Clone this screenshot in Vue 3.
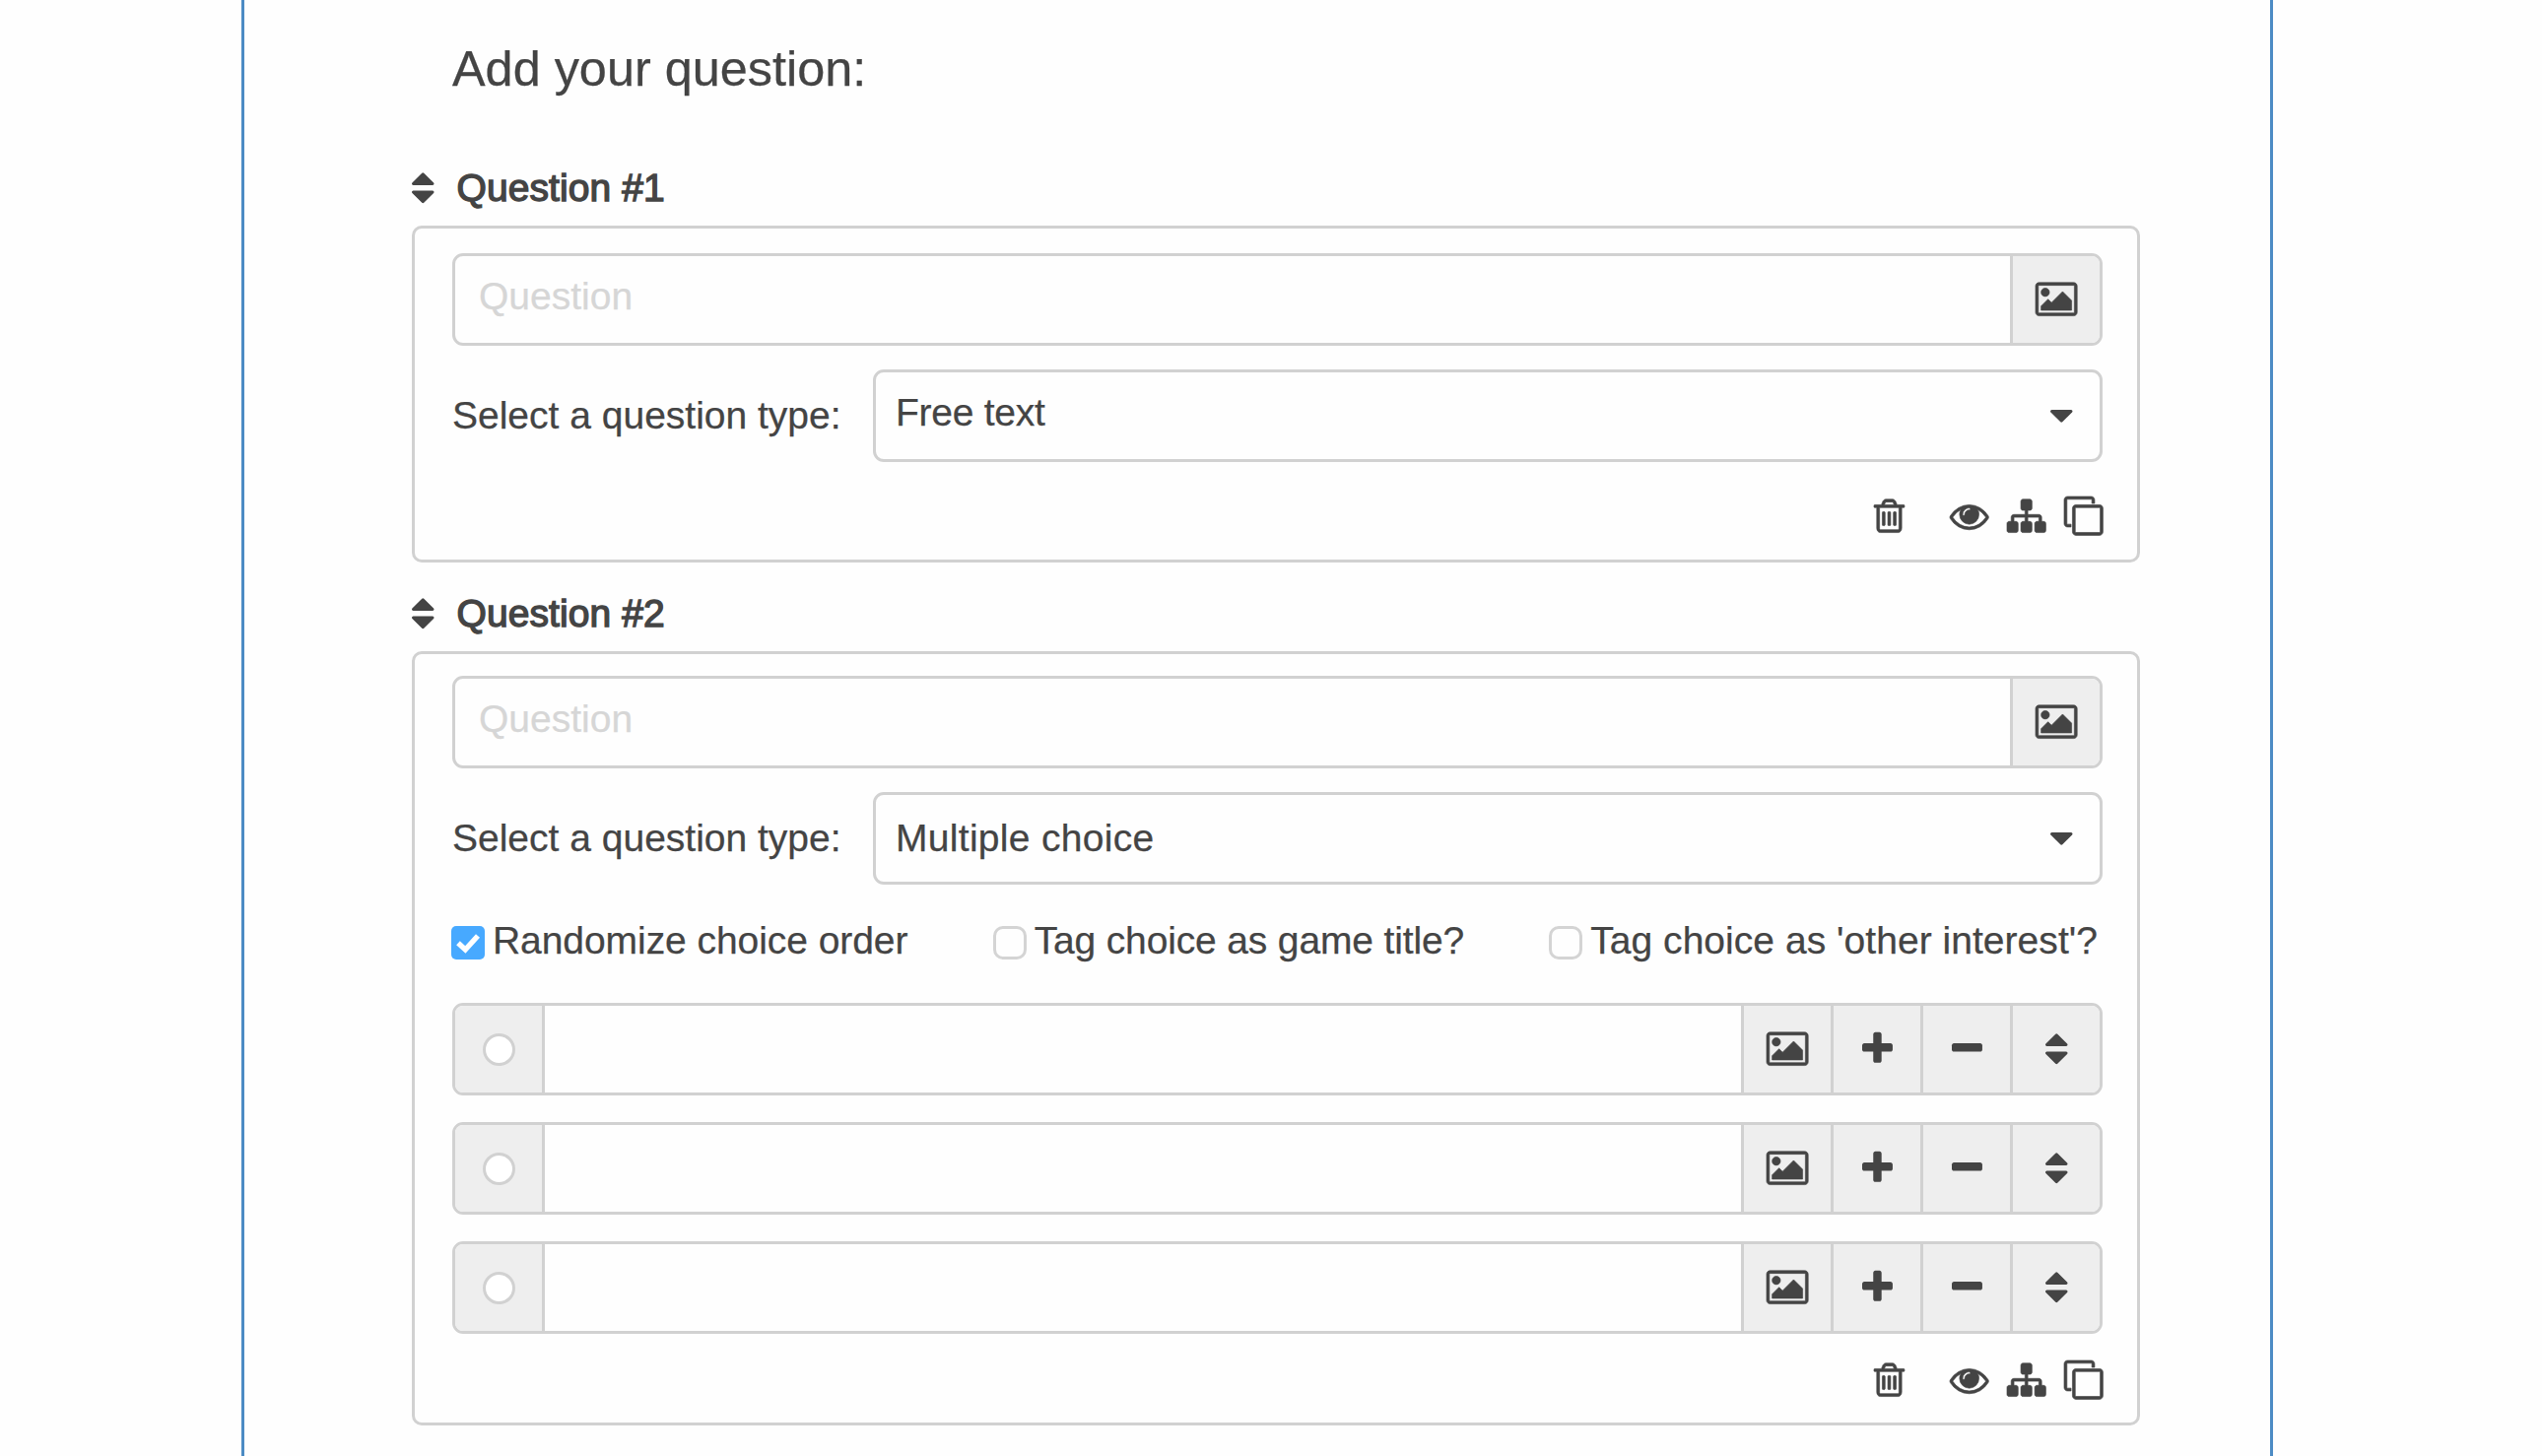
<script setup>
import { reactive } from 'vue'

const icons = {
  sort: {
    box: '384 0 1024 1792',
    d: 'M1408 1088q0 26-19 45l-448 448q-19 19-45 19t-45-19l-448-448q-19-19-19-45t19-45 45-19h896q26 0 45 19t19 45zm0-384q0 26-19 45t-45 19h-896q-26 0-45-19t-19-45 19-45l448-448q19-19 45-19t45 19l448 448q19 19 19 45z',
  },
  caret: {
    box: '384 0 1024 1792',
    d: 'M1408 704q0 26-19 45l-448 448q-19 19-45 19t-45-19l-448-448q-19-19-19-45t19-45 45-19h896q26 0 45 19t19 45z',
  },
  image: {
    box: '-64 0 1920 1792',
    d: 'M576 576q0 80-56 136t-136 56-136-56-56-136 56-136 136-56 136 56 56 136zm1024 384v448h-1408v-192l320-320 160 160 512-512zm96-704h-1600q-13 0-22.5 9.5t-9.5 22.5v1216q0 13 9.5 22.5t22.5 9.5h1600q13 0 22.5-9.5t9.5-22.5v-1216q0-13-9.5-22.5t-22.5-9.5zm160 32v1216q0 66-47 113t-113 47h-1600q-66 0-113-47t-47-113v-1216q0-66 47-113t113-47h1600q66 0 113 47t47 113z',
  },
  plus: {
    box: '192 0 1408 1792',
    d: 'M1600 736v192q0 40-28 68t-68 28h-416v416q0 40-28 68t-68 28h-192q-40 0-68-28t-28-68v-416h-416q-40 0-68-28t-28-68v-192q0-40 28-68t68-28h416v-416q0-40 28-68t68-28h192q40 0 68 28t28 68v416h416q40 0 68 28t28 68z',
  },
  minus: {
    box: '192 0 1408 1792',
    d: 'M1600 736v192q0 40-28 68t-68 28h-1216q-40 0-68-28t-28-68v-192q0-40 28-68t68-28h1216q40 0 68 28t28 68z',
  },
  trash: {
    box: '192 0 1408 1792',
    d: 'M704 736v576q0 14-9 23t-23 9h-64q-14 0-23-9t-9-23v-576q0-14 9-23t23-9h64q14 0 23 9t9 23zm256 0v576q0 14-9 23t-23 9h-64q-14 0-23-9t-9-23v-576q0-14 9-23t23-9h64q14 0 23 9t9 23zm256 0v576q0 14-9 23t-23 9h-64q-14 0-23-9t-9-23v-576q0-14 9-23t23-9h64q14 0 23 9t9 23zm128 724v-948h-896v948q0 22 7 40.5t14.5 27 10.5 8.5h832q3 0 10.5-8.5t14.5-27 7-40.5zm-672-1076h448l-48-117q-7-9-17-11h-317q-10 2-17 11zm928 32v64q0 14-9 23t-23 9h-96v948q0 83-47 143.5t-113 60.5h-832q-66 0-113-58.5t-47-141.5v-952h-96q-14 0-23-9t-9-23v-64q0-14 9-23t23-9h309l70-167q15-37 54-63t79-26h320q40 0 79 26t54 63l70 167h309q14 0 23 9t9 23z',
  },
  eye: {
    box: '0 0 1792 1792',
    d: 'M1664 960q-152-236-381-353 61 104 61 225 0 185-131.5 316.5t-316.5 131.5-316.5-131.5-131.5-316.5q0-121 61-225-229 117-381 353 133 205 333.5 326.5t434.5 121.5 434.5-121.5 333.5-326.5zm-720-384q0-20-14-34t-34-14q-125 0-214.5 89.5t-89.5 214.5q0 20 14 34t34 14 34-14 14-34q0-86 61-147t147-61q20 0 34-14t14-34zm848 384q0 34-20 69-140 230-376.5 368.5t-499.5 138.5-499.5-139-376.5-368q-20-35-20-69t20-69q140-229 376.5-368t499.5-139 499.5 139 376.5 368q20 35 20 69z',
  },
  sitemap: {
    box: '0 0 1792 1792',
    d: 'M1792 1248v320q0 40-28 68t-68 28h-320q-40 0-68-28t-28-68v-320q0-40 28-68t68-28h96v-192h-512v192h96q40 0 68 28t28 68v320q0 40-28 68t-68 28h-320q-40 0-68-28t-28-68v-320q0-40 28-68t68-28h96v-192h-512v192h96q40 0 68 28t28 68v320q0 40-28 68t-68 28h-320q-40 0-68-28t-28-68v-320q0-40 28-68t68-28h96v-192q0-52 38-90t90-38h512v-192h-96q-40 0-68-28t-28-68v-320q0-40 28-68t68-28h320q40 0 68 28t28 68v320q0 40-28 68t-68 28h-96v192h512q52 0 90 38t38 90v192h96q40 0 68 28t28 68z',
  },
  clone: {
    box: '0 0 1792 1792',
    d: 'M1664 1632v-1088q0-13-9.5-22.5t-22.5-9.5h-1088q-13 0-22.5 9.5t-9.5 22.5v1088q0 13 9.5 22.5t22.5 9.5h1088q13 0 22.5-9.5t9.5-22.5zm128-1088v1088q0 66-47 113t-113 47h-1088q-66 0-113-47t-47-113v-1088q0-66 47-113t113-47h1088q66 0 113 47t47 113zm-384-384v160h-128v-160q0-13-9.5-22.5t-22.5-9.5h-1088q-13 0-22.5 9.5t-9.5 22.5v1088q0 13 9.5 22.5t22.5 9.5h160v128h-160q-66 0-113-47t-47-113v-1088q0-66 47-113t113-47h1088q66 0 113 47t47 113z',
  },
}

const questions = reactive([
  { id: 1, type: 'Free text', kind: 'free', options: [], choices: 0 },
  {
    id: 2,
    type: 'Multiple choice',
    kind: 'multi',
    options: [
      { key: 'randomize', label: 'Randomize choice order', checked: true },
      { key: 'game', label: 'Tag choice as game title?', checked: false },
      { key: 'interest', label: "Tag choice as 'other interest'?", checked: false },
    ],
    choices: 3,
  },
])

const choiceTools = ['image', 'plus', 'minus', 'sort']
const footerTools = ['trash', 'eye', 'sitemap', 'clone']
</script>

<template>
  <main class="panel">
    <h1 class="heading">Add your question:</h1>

    <section v-for="q in questions" :key="q.id" class="question" :class="q.kind">
      <header class="title">
        <svg class="icon" :viewBox="icons.sort.box"><path :d="icons.sort.d" /></svg>
        <h2>Question #{{ q.id }}</h2>
      </header>

      <div class="card">
        <div class="group">
          <div class="field placeholder"><span>Question</span></div>
          <div class="addon">
            <svg class="icon line" :viewBox="icons.image.box"><path :d="icons.image.d" /></svg>
          </div>
        </div>

        <div class="type-row">
          <label class="type-label">Select a question type:</label>
          <div class="select">
            <span class="value">{{ q.type }}</span>
            <svg class="icon" :viewBox="icons.caret.box"><path :d="icons.caret.d" /></svg>
          </div>
        </div>

        <div v-if="q.options.length" class="options">
          <label v-for="o in q.options" :key="o.key" class="option" :class="o.key">
            <span class="check" :class="{ on: o.checked }">
              <svg v-if="o.checked" viewBox="0 0 34 34"><path d="M7 17.2L14.3 24L27 10" /></svg>
            </span>
            <span class="option-text">{{ o.label }}</span>
          </label>
        </div>

        <div v-for="n in q.choices" :key="n" class="group choice">
          <div class="addon radio-cell"><span class="radio"></span></div>
          <div class="field"></div>
          <div v-for="t in choiceTools" :key="t" class="addon">
            <svg class="icon" :class="{ line: t === 'image' }" :viewBox="icons[t].box">
              <path :d="icons[t].d" />
            </svg>
          </div>
        </div>

        <footer class="tools">
          <svg v-for="t in footerTools" :key="t" class="icon line" :class="t" :viewBox="icons[t].box">
            <path :d="icons[t].d" />
          </svg>
        </footer>
      </div>
    </section>
  </main>
</template>

<style>
body {
  background: #fefefe;
  overflow: hidden;
}
</style>

<style scoped>
.panel {
  box-sizing: border-box;
  width: 2062px;
  height: 1478px;
  margin-left: 245px;
  padding: 40px 133px 0 170px;
  border: solid #4c8bc4;
  border-width: 0 3px;
  overflow: hidden;
  color: #444;
  font-family: "Liberation Sans", Arial, Helvetica, sans-serif;
  font-size: 39px;
  line-height: 60px;
  -webkit-text-stroke: 0.25px #444;
}
.icon {
  display: block;
  flex: none;
  height: 39.4px;
  overflow: visible;
  fill: #444;
}
.icon.line {
  stroke: #444;
  stroke-width: 30;
}
.heading {
  margin: 0 0 61px 41px;
  font-size: 50.4px;
  font-weight: 400;
  line-height: 60px;
}
.title {
  display: flex;
  align-items: center;
  height: 60px;
  margin-bottom: 8px;
}
h2 {
  margin: 0 0 0 23px;
  font-size: 39px;
  font-weight: 400;
  letter-spacing: 0.1px;
  -webkit-text-stroke: 1.4px #444;
}
.card {
  box-sizing: border-box;
  width: 1754px;
  height: 342px;
  padding: 25px 35px 0 38px;
  border: 3px solid #d1d1d1;
  border-radius: 10px;
}
.free {
  margin-bottom: 22px;
}
.multi .card {
  height: 786px;
  padding-top: 22px;
}
.group {
  box-sizing: border-box;
  display: flex;
  height: 94px;
  border: 3px solid #d1d1d1;
  border-radius: 11px;
  overflow: hidden;
}
.field {
  flex: 1;
  padding-left: 24px;
}
.placeholder {
  color: #d6d6d6;
  -webkit-text-stroke-color: #d6d6d6;
}
.placeholder span {
  display: block;
  margin-top: 11px;
}
.addon {
  box-sizing: border-box;
  display: flex;
  align-items: center;
  justify-content: center;
  width: 91px;
  border-left: 3px solid #d1d1d1;
  background: #eee;
}
.radio-cell {
  border-left: 0;
  border-right: 3px solid #d1d1d1;
}
.radio {
  box-sizing: border-box;
  width: 33px;
  height: 33px;
  margin-left: 1px;
  border: 3px solid #d1d1d1;
  border-radius: 50%;
  background: #fff;
}
.type-row {
  display: flex;
  align-items: center;
  height: 94px;
  margin-top: 24px;
}
.type-label {
  width: 427px;
}
.select {
  box-sizing: border-box;
  display: flex;
  flex: 1;
  align-items: center;
  justify-content: space-between;
  height: 94px;
  padding: 0 28px 0 20px;
  border: 3px solid #d1d1d1;
  border-radius: 11px;
}
.free .value {
  padding-bottom: 6px;
  letter-spacing: -0.25px;
}
.multi .value {
  letter-spacing: 0.3px;
}
.options {
  display: flex;
  justify-content: space-between;
  height: 60px;
  margin: 27px 5px 33px -1px;
}
.option {
  display: flex;
  align-items: center;
}
.randomize {
  letter-spacing: -0.06px;
}
.game {
  letter-spacing: -0.15px;
}
.interest {
  letter-spacing: 0.04px;
}
.check {
  box-sizing: border-box;
  width: 34px;
  height: 34px;
  margin: 4px 8px 0 0;
  border: 3px solid #d4d4d4;
  border-radius: 10px;
}
.check.on {
  border: 0;
  border-radius: 5px;
  background: #47a9ff;
}
.check svg {
  display: block;
  fill: none;
  stroke: #fff;
  stroke-width: 5.4;
}
.choice {
  margin-bottom: 27px;
}
.tools {
  display: flex;
  justify-content: flex-end;
  margin-top: 35px;
}
.choice + .tools {
  margin-top: 0;
}
.eye {
  margin-left: 46px;
}
.sitemap,
.clone {
  margin-left: 18.5px;
}
</style>
